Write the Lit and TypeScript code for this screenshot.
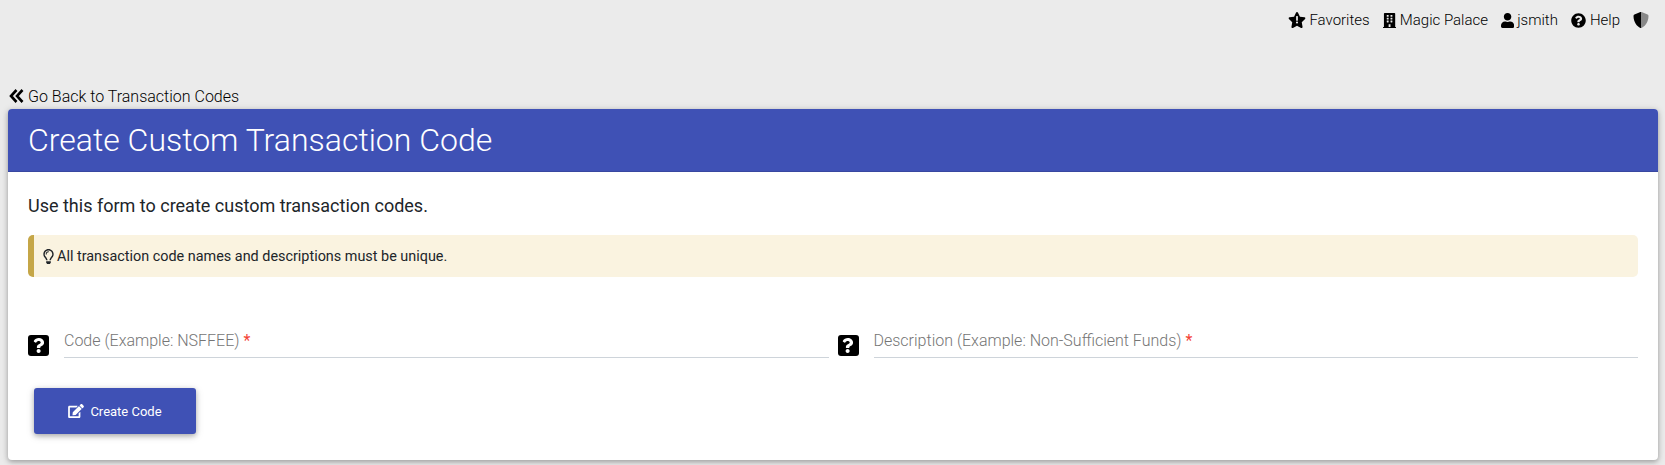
import { LitElement, html, css } from "lit";
import { customElement } from "lit/decorators.js";

const ic = (vb: string, d: string, cls = "") =>
  html`<svg class="ic ${cls}" viewBox="${vb}" fill="currentColor"><path d="${d}"></path></svg>`;

const STAR = "M259.3 17.8L194 150.2 47.9 171.5c-26.2 3.8-36.7 36.1-17.7 54.6l105.7 103-25 145.5c-4.5 26.3 23.2 46 46.4 33.7L288 439.6l130.7 68.7c23.2 12.2 50.9-7.4 46.4-33.7l-25-145.5 105.7-103c19-18.5 8.5-50.8-17.7-54.6L382 150.2 316.7 17.8c-11.7-23.6-45.6-23.9-57.4 0z";
const BUILDING = "M436 480h-20V24c0-13.255-10.745-24-24-24H56C42.745 0 32 10.745 32 24v456H12c-6.627 0-12 5.373-12 12v20h448v-20c0-6.627-5.373-12-12-12zM128 76c0-6.627 5.373-12 12-12h40c6.627 0 12 5.373 12 12v40c0 6.627-5.373 12-12 12h-40c-6.627 0-12-5.373-12-12V76zm0 96c0-6.627 5.373-12 12-12h40c6.627 0 12 5.373 12 12v40c0 6.627-5.373 12-12 12h-40c-6.627 0-12-5.373-12-12v-40zm52 148h-40c-6.627 0-12-5.373-12-12v-40c0-6.627 5.373-12 12-12h40c6.627 0 12 5.373 12 12v40c0 6.627-5.373 12-12 12zm76 160h-64v-84c0-6.627 5.373-12 12-12h40c6.627 0 12 5.373 12 12v84zm64-172c0 6.627-5.373 12-12 12h-40c-6.627 0-12-5.373-12-12v-40c0-6.627 5.373-12 12-12h40c6.627 0 12 5.373 12 12v40zm0-96c0 6.627-5.373 12-12 12h-40c-6.627 0-12-5.373-12-12v-40c0-6.627 5.373-12 12-12h40c6.627 0 12 5.373 12 12v40zm0-96c0 6.627-5.373 12-12 12h-40c-6.627 0-12-5.373-12-12V76c0-6.627 5.373-12 12-12h40c6.627 0 12 5.373 12 12v40z";
const USER = "M224 256c70.7 0 128-57.3 128-128S294.7 0 224 0 96 57.3 96 128s57.3 128 128 128zm89.6 32h-16.7c-22.2 10.2-46.9 16-72.9 16s-50.6-5.8-72.9-16h-16.7C60.2 288 0 348.2 0 422.4V464c0 26.5 21.5 48 48 48h352c26.5 0 48-21.5 48-48v-41.6c0-74.2-60.2-134.4-134.4-134.4z";
const QCIRCLE = "M504 256c0 136.997-111.043 248-248 248S8 392.997 8 256C8 119.083 119.043 8 256 8s248 111.083 248 248zM262.655 90c-54.497 0-89.255 22.957-116.549 63.758-3.536 5.286-2.353 12.415 2.715 16.258l34.699 26.31c5.205 3.947 12.621 3.008 16.665-2.122 17.864-22.658 30.113-35.797 57.303-35.797 20.429 0 45.698 13.148 45.698 32.958 0 14.976-12.363 22.667-32.534 33.976C247.128 238.528 216 254.941 216 296v4c0 6.627 5.373 12 12 12h56c6.627 0 12-5.373 12-12v-1.333c0-28.462 83.186-29.647 83.186-106.667 0-58.002-60.165-102-116.531-102zM256 338c-25.365 0-46 20.635-46 46 0 25.364 20.635 46 46 46s46-20.636 46-46c0-25.365-20.635-46-46-46z";
const BULB = "M176 80c-52.94 0-96 43.06-96 96 0 8.84 7.16 16 16 16s16-7.16 16-16c0-35.3 28.72-64 64-64 8.84 0 16-7.16 16-16s-7.16-16-16-16zM96.06 459.17c0 3.15.93 6.22 2.68 8.84l24.51 36.84c2.97 4.46 7.97 7.14 13.32 7.14h78.85c5.36 0 10.36-2.68 13.32-7.14l24.51-36.84c1.74-2.62 2.67-5.7 2.68-8.84l.05-43.18H96.02l.04 43.18zM176 0C73.72 0 0 82.97 0 176c0 44.37 16.45 84.85 43.56 115.78 16.64 18.99 42.74 58.8 52.42 92.16v.06h48v-.12c-.01-4.77-.72-9.51-2.15-14.07-5.59-17.81-22.82-64.77-62.17-109.67-20.54-23.43-31.52-53.15-31.61-84.14-.2-73.64 59.67-128 127.95-128 70.58 0 128 57.42 128 128 0 30.97-11.24 60.85-31.65 84.14-39.11 44.61-56.42 91.47-62.1 109.46a47.507 47.507 0 0 0-2.22 14.3v.1h48v-.05c9.68-33.37 35.78-73.18 52.42-92.16C335.55 260.85 352 220.37 352 176 352 78.8 273.2 0 176 0z";
const EDIT = "M402.6 83.2l90.2 90.2c3.8 3.8 3.8 10 0 13.8L274.4 405.6l-92.8 10.3c-12.4 1.4-22.9-9.1-21.5-21.5l10.3-92.8L388.8 83.2c3.8-3.8 10-3.8 13.8 0zm162-22.9l-48.8-48.8c-15.2-15.2-39.9-15.2-55.2 0l-35.4 35.4c-3.8 3.8-3.8 10 0 13.8l90.2 90.2c3.8 3.8 10 3.8 13.8 0l35.4-35.4c15.2-15.3 15.2-40 0-55.2zM384 346.2V448H64V128h229.8c3.2 0 6.2-1.3 8.5-3.5l40-40c7.6-7.6 2.2-20.5-8.5-20.5H48C21.5 64 0 85.5 0 112v352c0 26.5 21.5 48 48 48h352c26.5 0 48-21.5 48-48V306.2c0-10.7-12.9-16-20.5-8.5l-40 40c-2.2 2.3-3.5 5.3-3.5 8.5z";
const QUESTION = "M202.021 0C122.202 0 70.503 32.703 29.914 91.026c-7.363 10.58-5.093 25.086 5.178 32.874l43.138 32.709c10.373 7.865 25.132 6.026 33.253-4.148 25.049-31.381 43.63-49.449 82.757-49.449 30.764 0 68.816 19.799 68.816 49.631 0 22.552-18.617 34.134-48.993 51.164-35.423 19.86-82.299 44.576-82.299 106.405V320c0 13.255 10.745 24 24 24h72.471c13.255 0 24-10.745 24-24v-5.773c0-42.86 125.268-44.645 125.268-160.627C377.504 66.256 286.902 0 202.021 0zM192 373.459c-38.196 0-69.271 31.075-69.271 69.271 0 38.195 31.075 69.27 69.271 69.27s69.271-31.075 69.271-69.271-31.075-69.27-69.271-69.27z";

@customElement("app-root")
export class AppRoot extends LitElement {
  static styles = css`
    :host {
      display: block;
      min-height: 465px;
      background: #ebebeb;
      font-family: Roboto, "Liberation Sans", sans-serif;
      color: #212529;
      overflow: hidden;
    }
    .ic { display: block; flex: none; }
    .nav {
      display: flex;
      justify-content: flex-end;
      align-items: center;
      height: 40px;
      padding-right: 16px;
      gap: 13px;
      font-size: 15px;
      font-weight: 300;
      color: #000;
    }
    .nav-item { display: flex; align-items: center; gap: 4px; }
    .nav-item.tight { gap: 3px; }
    .i15 { height: 15px; width: auto; color: #000; }
    .star { width: 18px; height: 16px; color: #000; margin-right: -1px; }
    .shield { width: 16px; height: 16px; }
    .back {
      display: flex;
      align-items: center;
      gap: 4px;
      margin: 44px 0 1px;
      padding-left: 9px;
      height: 24px;
      font-size: 16px;
      font-weight: 300;
      color: #000;
    }
    .dbl { width: 15px; height: 14px; color: #000; }
    .card {
      margin: 0 7px 0 8px;
      background: #fff;
      border-radius: 4px;
      box-shadow: 0 2px 5px rgba(0,0,0,.26), 0 1px 8px rgba(0,0,0,.12);
      height: 351px;
      display: flex;
      flex-direction: column;
    }
    .head {
      background: #3f51b5;
      color: #fff;
      height: 63px;
      box-sizing: border-box;
      border-radius: 4px 4px 0 0;
      border-bottom: 1px solid #3847a0;
      padding-left: 20px;
      display: flex;
      align-items: center;
      font-size: 32px;
      font-weight: 300;
    }
    .body { padding: 0 20px; }
    .intro { margin: 23px 0 0; font-size: 18px; line-height: 22px; font-weight: 400; color: #212529; }
    .alert {
      margin-top: 18px;
      height: 42px;
      box-sizing: border-box;
      background: #faf3e0;
      border-left: 6px solid #c5a647;
      border-radius: 5px;
      padding-left: 9px;
      display: flex;
      align-items: center;
      gap: 3px;
      font-size: 14.4px;
      color: #212529;
    }
    .bulb { height: 15px; width: 11px; color: #212529; }
    .fields { display: grid; grid-template-columns: 1fr 1fr; column-gap: 9px; margin-top: 44px; }
    .field { display: flex; align-items: flex-end; gap: 15px; }
    .qbox {
      flex: none;
      width: 21px;
      height: 21px;
      margin-bottom: 2px;
      border-radius: 3px;
      background: #000;
      color: #fff;
      display: flex;
      align-items: center;
      justify-content: center;
    }
    .qbox .ic { height: 15px; width: auto; }
    .input {
      flex: 1;
      height: 37px;
      box-sizing: border-box;
      padding-top: 2px;
      border-bottom: 1px solid #ced4da;
      display: flex;
      align-items: center;
      font-size: 16px;
      font-weight: 300;
      color: #757575;
    }
    .req { color: #f44336; margin-left: 4px; font-weight: 400; }
    .btn {
      margin: 30px 0 0 6px;
      width: 162px;
      height: 46px;
      border: 0;
      border-radius: 3px;
      background: #3f51b5;
      color: #fff;
      font: 400 13px Roboto, "Liberation Sans", sans-serif;
      display: flex;
      align-items: center;
      justify-content: center;
      gap: 6px;
      box-shadow: 0 2px 5px rgba(0,0,0,.26), 0 2px 10px rgba(0,0,0,.12);
    }
    .btn .ic { width: 16px; height: 14px; }
  `;

  render() {
    return html`
      <nav class="nav">
        <span class="nav-item">
          <svg class="ic star" viewBox="0 0 576 512">
            <path fill="currentColor" d="${STAR}"></path>
            <rect x="260" y="130" width="56" height="150" rx="16" fill="#ebebeb"></rect>
            <circle cx="288" cy="335" r="34" fill="#ebebeb"></circle>
          </svg>
          Favorites
        </span>
        <span class="nav-item">${ic("0 0 448 512", BUILDING, "i15")}Magic Palace</span>
        <span class="nav-item tight">${ic("0 0 448 512", USER, "i15")}jsmith</span>
        <span class="nav-item">${ic("0 0 512 512", QCIRCLE, "i15")}Help</span>
        <svg class="ic shield" viewBox="0 0 512 512">
          <path fill="#888" d="M466.5 83.7l-192-80a48.15 48.15 0 0 0-18.4-3.7V512c6.2 0 12.5-1.2 18.3-3.7C360.1 472.6 496 349.3 496 128c0-19.4-11.7-36.9-29.5-44.3z"></path>
          <path fill="#000" d="M256 0c-6.3 0-12.6 1.2-18.4 3.7l-192 80C27.7 91.1 16 108.6 16 128c0 198.5 114.5 335.7 221.5 380.3 5.9 2.5 12.2 3.7 18.5 3.7z"></path>
        </svg>
      </nav>
      <div class="back">
        <svg class="ic dbl" viewBox="0 0 15 14" fill="none" stroke="currentColor" stroke-width="2.6" stroke-linecap="butt" stroke-linejoin="miter">
          <path d="M7.5 1L2 7l5.5 6M13.5 1L8 7l5.5 6"></path>
        </svg>
        Go Back to Transaction Codes
      </div>
      <section class="card">
        <header class="head">Create Custom Transaction Code</header>
        <div class="body">
          <p class="intro">Use this form to create custom transaction codes.</p>
          <div class="alert">${ic("0 0 352 512", BULB, "bulb")}All transaction code names and descriptions must be unique.</div>
          <div class="fields">
            <div class="field">
              <span class="qbox">${ic("0 0 384 512", QUESTION)}</span>
              <div class="input">Code (Example: NSFFEE)<span class="req">*</span></div>
            </div>
            <div class="field">
              <span class="qbox">${ic("0 0 384 512", QUESTION)}</span>
              <div class="input">Description (Example: Non-Sufficient Funds)<span class="req">*</span></div>
            </div>
          </div>
          <button class="btn">${ic("0 0 576 512", EDIT)}Create Code</button>
        </div>
      </section>
    `;
  }
}
